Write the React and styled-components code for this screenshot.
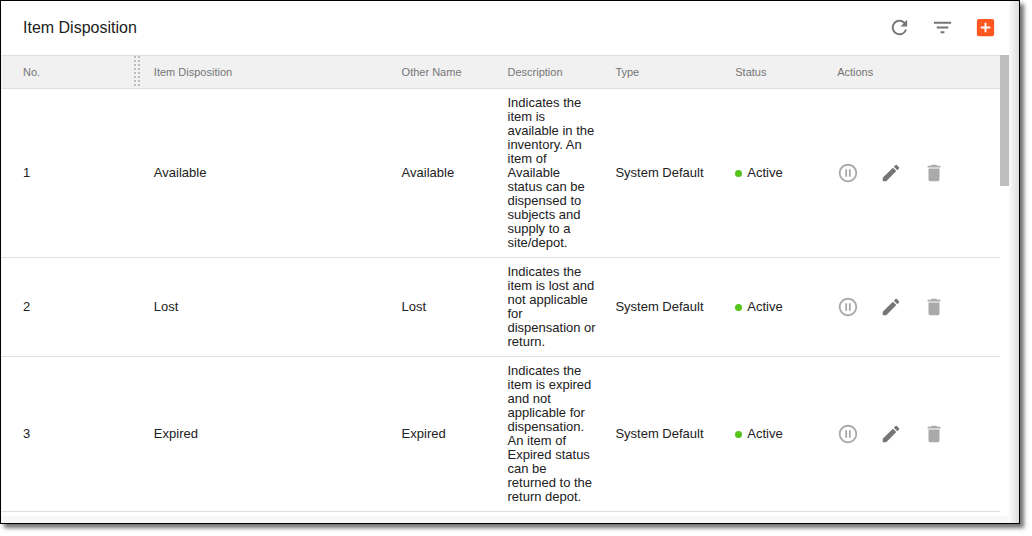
import React from 'react'
import styled, { createGlobalStyle } from 'styled-components'
import {
  MdRefresh,
  MdFilterList,
  MdAddBox,
  MdPauseCircleOutline,
  MdEdit,
  MdDelete,
} from 'react-icons/md'

const GlobalStyle = createGlobalStyle`
  * {
    box-sizing: border-box;
  }
  body {
    margin: 0;
    min-height: 100vh;
    background: #fff;
    font-family: 'Liberation Sans', Arial, sans-serif;
    color: #212121;
  }
`

const Page = styled.div`
  height: 100vh;
  padding: 0 12px 12px 0;
  overflow: hidden;
`

const Frame = styled.main`
  display: flex;
  flex-direction: column;
  height: 100%;
  padding: 0 10px 7px 0;
  border: 1px solid #000;
  background: linear-gradient(to right, #f8f8f8 calc(100% - 9px), #dcdcdc);
  box-shadow: 4px 4px 4px rgba(0, 0, 0, 0.55);
`

const Toolbar = styled.header`
  display: flex;
  flex: none;
  align-items: center;
  justify-content: space-between;
  height: 54px;
  padding: 0 12px 1px 22px;
  background: #fff;
`

const Title = styled.h1`
  margin: 0;
  font-size: 16px;
  font-weight: 400;
  line-height: 20px;
`

const Actions = styled.div`
  display: flex;
  align-items: center;
  gap: ${({ $gap }) => $gap};
`

const IconButton = styled.button`
  display: flex;
  padding: 0;
  border: 0;
  background: none;
  color: ${({ $color }) => $color || '#757575'};
  font-size: ${({ $size }) => $size || '22px'};
  cursor: pointer;

  &:disabled {
    color: #aaa;
    cursor: default;
  }
`

const Body = styled.section`
  display: flex;
  flex: 1;
  min-height: 0;
  background: #fff;
`

const TableArea = styled.div`
  flex: 1;
  min-width: 0;
  overflow: hidden;
`

const ScrollTrack = styled.div`
  flex: none;
  width: 9px;
`

const ScrollThumb = styled.div`
  height: 131px;
  background: #bdbdbd;
`

const Table = styled.table`
  width: 100%;
  table-layout: fixed;
  border-collapse: separate;
  border-spacing: 0;
`

const Col = styled.col`
  width: ${({ $width }) => $width};
`

const HeadCell = styled.th`
  position: relative;
  height: 34px;
  padding: 0 4px 0 14px;
  border-top: 1px solid #dedede;
  border-bottom: 1px solid #dedede;
  background: #f1f1f1;
  color: #757575;
  font-size: 11px;
  font-weight: 400;
  line-height: 14px;
  text-align: left;

  &:first-child {
    padding-left: 22px;
  }
`

const ResizeHandle = styled.span`
  position: absolute;
  top: 0;
  right: 0;
  bottom: 0;
  width: 6px;
  background: repeating-linear-gradient(
      to bottom,
      transparent 0 2px,
      #f1f1f1 2px 4px
    ),
    linear-gradient(to right, #bdbdbd 2px, transparent 2px 4px, #bdbdbd 4px);
  cursor: col-resize;
`

const Cell = styled.td`
  padding: 7px 5px 7px 14px;
  border-bottom: 1px solid #dedede;
  font-size: 13px;
  line-height: 14px;
  vertical-align: middle;

  &:first-child {
    padding-left: 22px;
  }
`

const Status = styled.span`
  display: flex;
  align-items: center;
  gap: 5px;

  &::before {
    content: '';
    width: 7px;
    height: 7px;
    border-radius: 50%;
    background: #52c41a;
  }
`

const columns = [
  { label: 'No.', width: '13.9%', resizable: true },
  { label: 'Item Disposition', width: '24.8%' },
  { label: 'Other Name', width: '10.6%' },
  { label: 'Description', width: '10.8%' },
  { label: 'Type', width: '12%' },
  { label: 'Status', width: '10.2%' },
  { label: 'Actions', width: '17.7%' },
]

const items = [
  {
    name: 'Available',
    description:
      'Indicates the item is available in the inventory. An item of Available status can be dispensed to subjects and supply to a site/depot.',
  },
  {
    name: 'Lost',
    description:
      'Indicates the item is lost and not applicable for dispensation or return.',
  },
  {
    name: 'Expired',
    description:
      'Indicates the item is expired and not applicable for dispensation. An item of Expired status can be returned to the return depot.',
  },
]

const ItemRow = ({ item, number }) => (
  <tr>
    <Cell>{number}</Cell>
    <Cell>{item.name}</Cell>
    <Cell>{item.name}</Cell>
    <Cell>{item.description}</Cell>
    <Cell>System Default</Cell>
    <Cell>
      <Status>Active</Status>
    </Cell>
    <Cell>
      <Actions $gap='21px'>
        <IconButton type='button' aria-label={`Pause ${item.name}`} disabled>
          <MdPauseCircleOutline />
        </IconButton>
        <IconButton type='button' aria-label={`Edit ${item.name}`}>
          <MdEdit />
        </IconButton>
        <IconButton type='button' aria-label={`Delete ${item.name}`} disabled>
          <MdDelete />
        </IconButton>
      </Actions>
    </Cell>
  </tr>
)

const App = () => (
  <Page>
    <GlobalStyle />
    <Frame>
      <Toolbar>
        <Title>Item Disposition</Title>
        <Actions $gap='20px'>
          <IconButton type='button' aria-label='Refresh' $size='23px'>
            <MdRefresh />
          </IconButton>
          <IconButton type='button' aria-label='Filter' $size='23px'>
            <MdFilterList />
          </IconButton>
          <IconButton
            type='button'
            aria-label='Add item'
            $size='23px'
            $color='#ff5722'
          >
            <MdAddBox />
          </IconButton>
        </Actions>
      </Toolbar>
      <Body>
        <TableArea>
          <Table>
            <colgroup>
              {columns.map(({ label, width }) => (
                <Col key={label} $width={width} />
              ))}
            </colgroup>
            <thead>
              <tr>
                {columns.map(({ label, resizable }) => (
                  <HeadCell key={label} scope='col'>
                    {label}
                    {resizable && <ResizeHandle />}
                  </HeadCell>
                ))}
              </tr>
            </thead>
            <tbody>
              {items.map((item, index) => (
                <ItemRow key={item.name} item={item} number={index + 1} />
              ))}
            </tbody>
          </Table>
        </TableArea>
        <ScrollTrack aria-hidden='true'>
          <ScrollThumb />
        </ScrollTrack>
      </Body>
    </Frame>
  </Page>
)

export default App
